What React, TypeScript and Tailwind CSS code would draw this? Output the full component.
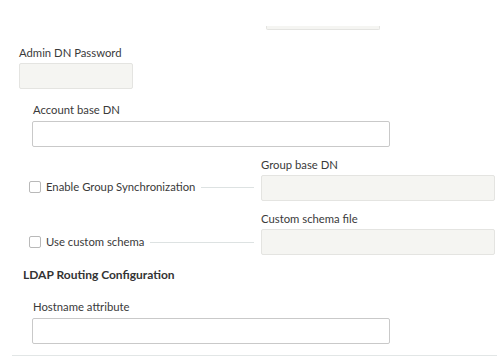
import React from "react";

const font = { fontFamily: '"Lato", "Noto Sans", sans-serif' };

function Label({ children, className = "" }: { children: React.ReactNode; className?: string }) {
  return <div className={`text-[11.3px] leading-[16px] text-[#3a3a3a] ${className}`}>{children}</div>;
}

function TextInput({ className = "" }: { className?: string }) {
  return <div className={`h-[26px] rounded-[2px] border border-[#c9c9c9] bg-white ${className}`} />;
}

function DisabledInput({ className = "" }: { className?: string }) {
  return <div className={`h-[26px] rounded-[2px] border border-[#e4e4e1] bg-[#f5f5f2] ${className}`} />;
}

function CheckRow({ label }: { label: string }) {
  return (
    <div className="flex items-center pl-[29px]">
      <div className="h-[12px] w-[12px] shrink-0 rounded-[2px] border border-[#b9b9b9] bg-white" />
      <span className="ml-[5px] whitespace-nowrap text-[11.3px] leading-[16px] text-[#3a3a3a]">{label}</span>
      <div className="ml-[6px] h-px flex-1 bg-[#dde2e2]" />
    </div>
  );
}

export default function App() {
  return (
    <div className="h-[356px] w-[503px] overflow-hidden bg-white pt-px" style={font}>
      {/* bottom edge of a field scrolled off the top */}
      <div className="-mt-px pl-[266px]">
        <div className="mt-[26px] h-[4px] w-[114px] rounded-b-[2px] border-x border-b border-[#e4e4e1] bg-[#f5f5f2]" />
      </div>

      <div className="mt-[15px] pl-[19px]">
        <Label>Admin DN Password</Label>
        <DisabledInput className="mt-[2px] w-[114px]" />
      </div>

      <div className="mt-[13px] pl-[32px]">
        <Label className="pl-px">Account base DN</Label>
        <TextInput className="mt-[3px] w-[358px]" />
      </div>

      <div className="mt-[10px] grid grid-cols-[254px_234px] gap-x-[7px]">
        <div className="flex flex-col justify-end pb-[6px]">
          <CheckRow label="Enable Group Synchronization" />
        </div>
        <div>
          <Label>Group base DN</Label>
          <DisabledInput className="mt-[2px]" />
        </div>
        <div className="flex flex-col justify-end pb-[5px]">
          <CheckRow label="Use custom schema" />
        </div>
        <div className="mt-[10px]">
          <Label>Custom schema file</Label>
          <DisabledInput className="mt-[2px]" />
        </div>
      </div>

      <div className="mt-[12px] pl-[23px] text-[12px] font-bold leading-[16px] text-[#333]">
        LDAP Routing Configuration
      </div>

      <div className="mt-[16px] pl-[32px]">
        <Label className="pl-px">Hostname attribute</Label>
        <TextInput className="mt-[3px] w-[358px]" />
      </div>

      <div className="mx-[12px] mt-[11px] h-px w-[485px] bg-[#e2e6e6]" />
    </div>
  );
}
